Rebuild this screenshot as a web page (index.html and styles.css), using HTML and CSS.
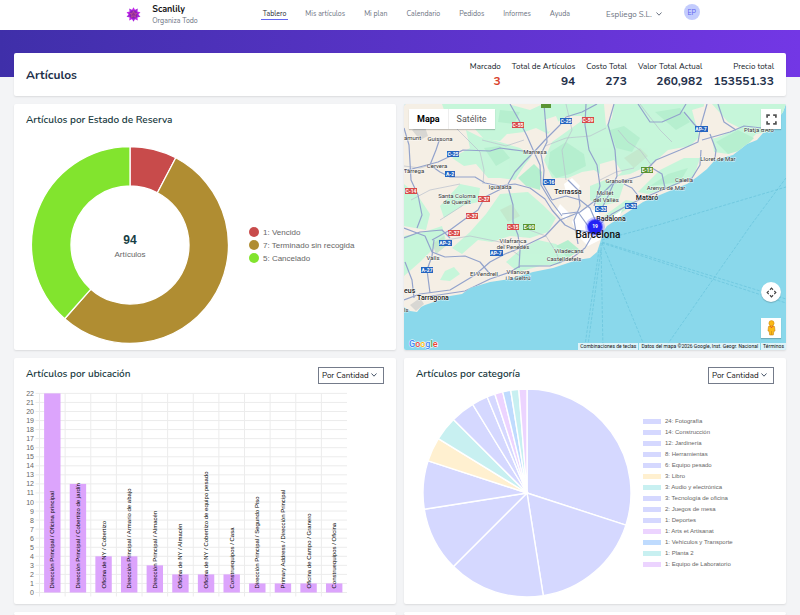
FILE: index.html
```html
<!DOCTYPE html>
<html lang="es">
<head>
<meta charset="utf-8">
<meta name="viewport" content="width=device-width, initial-scale=1">
<title>Scanlily – Tablero</title>
<link rel="stylesheet" href="styles.css">
</head>
<body>
<header class="topbar">
  <a class="brand" href="#">
    <svg class="brand-logo" viewBox="-8 -8 16 16" aria-hidden="true">
      <defs><path id="petal" d="M0-7.8 2.400-3.500 0 0-2.400-3.500Z"/></defs>
      <g fill="#c424ea">
        <use href="#petal"/><use href="#petal" transform="rotate(72)"/><use href="#petal" transform="rotate(144)"/><use href="#petal" transform="rotate(216)"/><use href="#petal" transform="rotate(288)"/>
      </g>
      <g fill="#a826dc">
        <use href="#petal" transform="rotate(36)"/><use href="#petal" transform="rotate(108)"/><use href="#petal" transform="rotate(180)"/><use href="#petal" transform="rotate(252)"/><use href="#petal" transform="rotate(324)"/>
      </g>
      <circle r="4.2" fill="#8a22b4"/>
      <path d="M0-3.6 1-1.2 3.5-1.1 1.5.5 2.2 3 0 1.6-2.2 3-1.5.5-3.5-1.1-1-1.2Z" fill="#8f2a9c" stroke="#d0608a" stroke-width=".6"/>
    </svg>
    <span class="brand-text"><strong>Scanlily</strong><small>Organiza Todo</small></span>
  </a>
  <nav class="nav">
    <a class="active" href="#">Tablero</a>
    <a href="#">Mis artículos</a>
    <a href="#">Mi plan</a>
    <a href="#">Calendario</a>
    <a href="#">Pedidos</a>
    <a href="#">Informes</a>
    <a href="#">Ayuda</a>
  </nav>
  <button class="company" type="button">Espliego S.L.
    <svg class="chevron" viewBox="0 0 6 4" aria-hidden="true"><path d="M.5.5 3 3.2 5.5.5"/></svg>
  </button>
  <button class="avatar" type="button">EP</button>
</header>

<main class="page">
  <section class="card summary">
    <h1>Artículos</h1>
    <dl class="stats">
      <div><dt>Marcado</dt><dd class="alert">3</dd></div>
      <div><dt>Total de Artículos</dt><dd>94</dd></div>
      <div><dt>Costo Total</dt><dd>273</dd></div>
      <div><dt>Valor Total Actual</dt><dd>260,982</dd></div>
      <div><dt>Precio total</dt><dd>153551.33</dd></div>
    </dl>
  </section>

  <div class="grid">
    <section class="card panel">
      <div class="panel-head"><h2>Artículos por Estado de Reserva</h2></div>
      <div class="status-body">
        <div class="donut">
          <svg id="donut" viewBox="-99 -99 198 198" aria-hidden="true"></svg>
          <p class="donut-label"><strong>94</strong><span>Artículos</span></p>
        </div>
        <ul class="status-legend" id="status-legend"></ul>
      </div>
    </section>

    <section class="card map">
      <svg class="map-canvas" viewBox="404 104 382 246" preserveAspectRatio="xMidYMid slice" role="img" aria-label="Mapa">
        <defs>
          <clipPath id="land"><path id="coast" d="M404 104V307L410 311 417 312 421 307 425 305 437 301 450 296 462 294 470 288 490 282 510 279 533 272 553 268 577 260 590 258 597 252 600 243 603 232 607 226 625 214 643 202 667 192 687 184 697 177 707 169 715 160 733 155 747 144 757 140 763 133 773 130 777 120 783 112 786 104Z"/></clipPath>
        </defs>
        <rect x="404" y="104" width="382" height="246" fill="#8ad8eb"/>
        <g clip-path="url(#land)">
          <rect x="404" y="104" width="382" height="246" fill="#f5efe5"/>
          <g fill="#c6f6da">
            <path d="M442 104H508L530 110 543 104H586L583 116 566 116 555 124 548 134 536 128 524 132 507 134 500 141 484 139 474 128 458 124 446 116Z"/>
            <path d="M466 130 480 137 500 142 520 148 532 156 524 166 515 180 500 178 488 178 476 164 464 166 452 158 470 148Z"/>
            <path d="M586 104H704L702 134 690 146 668 150 652 164 630 174 606 178 594 170 582 172 568 178 552 178 544 160 552 142 566 132 580 122Z"/>
            <path d="M712 104H786L778 130 756 134 742 148 728 154 714 152 712 132Z"/>
            <path d="M404 184 418 196 430 214 426 230 404 226Z"/>
            <path d="M460 184 480 188 478 202 462 206 444 218 440 206Z"/>
            <path d="M500 194 528 192 544 206 556 218 548 232 530 238 510 236 492 242 478 240 462 254 452 248 470 232 486 214Z"/>
            <path d="M404 236 424 232 442 226 446 240 432 250 420 262 404 276Z"/>
            <path d="M445 271 454 267 460 274 450 281 440 280Z"/>
            <path d="M520 250 538 240 556 244 570 254 560 264 540 266 518 272 506 262Z"/>
            <path d="M590 186 610 178 624 184 618 202 600 206 590 200Z"/>
            <path d="M638 192 660 170 684 158 700 158 694 176 670 188 648 194Z"/>
            <path d="M604 216 626 200 636 202 612 220Z"/>
          </g>
          <g fill="#b6efcf">
            <path d="M550 152 566 142 584 154 586 166 570 174 556 178 548 168Z"/>
            <path d="M518 178 534 164 542 172 540 190 526 186Z"/>
            <path d="M716 142 738 130 754 138 742 150 728 154Z"/>
            <path d="M610 130 624 126 640 138 632 152 616 148Z"/>
            <path d="M655 112 680 108 690 122 676 130Z"/>
            <path d="M556 246 568 240 580 250 568 258Z"/>
            <path d="M500 110 520 112 514 124 498 122Z"/>
            <path d="M650 186 668 174 688 168 680 182Z"/>
            <path d="M484 148 500 146 510 158 496 166Z"/>
          </g>
          <g fill="#c3e6cb" opacity=".8">
            <path d="M624 158 640 148 648 156 634 168Z"/><path d="M432 244 444 236 446 246 436 254Z"/><path d="M500 210 512 204 520 216 508 222Z"/>
          </g>
          <g fill="#f5efe5">
            <path d="M528 144 542 136 550 146 540 158 530 156Z"/><path d="M544 120 556 116 560 126 548 132Z"/><path d="M692 110 712 104 728 122 740 128 716 138 700 140Z"/><path d="M600 164 614 160 622 172 610 182 600 176Z"/><path d="M604 104H614L612 118 606 126Z"/>
          </g>
          <g fill="#d8d7d3">
            <path d="M412 130 424 124 428 136 420 140Z"/><path d="M410 305 420 298 424 304 416 311Z"/>
          </g>
          <g fill="#fff">
            <path d="M564 184 572 178 580 186 576 194 566 192Z"/><path d="M576 212 588 208 598 212 604 222 600 240 588 246 578 236 572 222Z"/><path d="M610 218 622 210 618 220Z"/><path d="M560 204 570 214 566 220 556 212Z"/>
          </g>
          <g class="road minor">
            <path d="M450 122 466 138 480 152 484 170 483 184"/><path d="M404 166 420 168 430 165"/><path d="M411 200 430 190 460 184"/><path d="M440 220 462 206 470 196"/><path d="M524 140 506 146 482 140"/><path d="M545 146 566 138 590 136 606 128"/><path d="M640 104 646 112 660 130 672 142"/><path d="M618 130 628 142 640 150 652 166"/><path d="M600 180 616 172 634 168"/><path d="M446 240 470 236 500 242 520 256"/><path d="M524 228 546 236 556 252 560 262"/><path d="M566 104 572 130 562 150 566 180"/>
          </g>
          <g class="road">
            <path d="M404 170 412 169 438 162 453 155 463 150 490 151 500 148 523 151 534 152 545 140 560 125 566 117 582 112 597 104"/>
            <path d="M430 165 440 172 450 177 475 177 485 183 500 186 515 184 530 188 545 199 552 210 565 225 575 230 590 232"/>
            <path d="M508 184 515 172 525 161 534 152"/>
            <path d="M510 104 519 120 527 136 534 152 540 165 541 185 550 200 562 216"/>
            <path d="M544 104 546 128 547 142 541 154 544 170 543 184 552 200"/>
            <path d="M586 104 585 125 589 150 597 165 600 186 594 206"/>
            <path d="M404 128 409 145 411 180 418 195 422 215 417 228"/>
            <path d="M430 165 436 150 440 138"/>
            <path d="M503 188 485 197 478 210 465 219 450 230 432 240"/>
            <path d="M508 187 513 205 513 222 518 235 520 250 519 268"/>
            <path d="M404 300 420 294 450 290 475 275 490 262 505 254 520 248 545 236 560 220 580 212 596 200 612 184 640 176 656 160 680 150 698 142 701 125 707 104"/>
            <path d="M425 297 465 291 490 279 510 272 520 266 550 266 572 258 585 248 592 236"/>
            <path d="M600 224 612 214 630 204 648 196 676 184 692 178 700 165 701 150"/>
            <path d="M404 228 425 236 432 252 445 257 465 256 480 262 490 274"/>
            <path d="M434 240 432 256 427 270 430 293"/><path d="M404 238 420 232 442 230 450 238"/>
            <path d="M614 104 608 125 615 150 617 176 608 196 600 212"/>
            <path d="M638 104 650 122 662 122 680 114 686 104"/>
            <path d="M684 112 694 124 702 132"/><path d="M702 140 730 132 744 126 762 128"/><path d="M718 104 724 122 736 130"/><path d="M710 134 716 150 715 158"/><path d="M652 168 662 174 665 188"/>
            <path d="M624 184 632 188 640 198"/><path d="M552 200 566 196 580 200 590 208 596 222"/><path d="M562 214 578 212 588 226 594 232"/><path d="M568 180 578 190 580 206 574 220 578 244"/><path d="M405 262 412 280 414 298"/>
          </g>
        </g>
        <g class="ferry">
          <path d="M602 242 786 299"/><path d="M602 243 786 303"/><path d="M602 243 646 350"/><path d="M601 243 603 350"/><path d="M599 250 585 345"/><path d="M601 250 588 345"/><path d="M667 345 751 225 786 178"/><path d="M602 240 658 225 786 187"/>
        </g>
        <g class="shield">
          <g fill="#2565c0"><rect x="447" y="151" width="12" height="6"/><rect x="445" y="171" width="10" height="6"/><rect x="560" y="118" width="12" height="6"/><rect x="543" y="179" width="12" height="6"/><rect x="695" y="126" width="13" height="6"/><rect x="625" y="203" width="12" height="6"/><rect x="595" y="206" width="12" height="6"/><rect x="439" y="240" width="13" height="6"/><rect x="490" y="250" width="13" height="6"/><rect x="421" y="267" width="12" height="6"/></g>
          <g fill="#d84a4a"><rect x="512" y="122" width="12" height="6"/><rect x="582" y="117" width="12" height="6"/><rect x="405" y="188" width="12" height="6"/><rect x="478" y="196" width="12" height="6"/><rect x="466" y="213" width="12" height="6"/><rect x="448" y="230" width="12" height="6"/><rect x="507" y="224" width="12" height="6"/></g>
          <g fill="#5a9434"><rect x="541" y="103" width="10" height="5"/><rect x="523" y="224" width="12" height="6"/><rect x="641" y="167" width="12" height="6"/></g>
          <g class="shield-text"><text x="453" y="156">C-25</text><text x="450" y="176">A-2</text><text x="566" y="123">C-25</text><text x="549" y="184">C-16</text><text x="701" y="131">AP-7</text><text x="631" y="208">C-32</text><text x="601" y="211">C-33</text><text x="445" y="245">AP-2</text><text x="496" y="255">AP-7</text><text x="427" y="272">A-27</text><text x="518" y="127">C-55</text><text x="588" y="122">C-59</text><text x="411" y="193">C-14</text><text x="484" y="201">C-37</text><text x="472" y="218">C-37</text><text x="454" y="235">C-37</text><text x="513" y="229">C-15</text><text x="529" y="229">E-90</text><text x="647" y="172">E-15</text></g>
        </g>
        <g class="place">
          <text class="edge" x="404" y="140">amunt</text><text x="440" y="141">Guissona</text><text x="437" y="168">Cervera</text><text x="414" y="173">Tàrrega</text><text x="535" y="154">Manresa</text><text x="500" y="189">Igualada</text><text x="457" y="198">Santa Coloma</text><text x="457" y="204">de Queralt</text><text x="619" y="183">Granollers</text><text x="605" y="195">Mollet</text><text x="606" y="202">del Vallès</text><text x="666" y="190">Arenys de Mar</text><text x="684" y="182">Calella</text><text x="718" y="161">Lloret de Mar</text><text x="759" y="132">Platja d'Aro</text><text x="433" y="260">Valls</text><text x="513" y="243">Vilafranca</text><text x="513" y="249">del Penedès</text><text x="569" y="253">Viladecans</text><text x="564" y="261">Castelldefels</text><text x="484" y="276">El Vendrell</text><text x="518" y="274">Vilanova</text><text x="518" y="280">i la Geltrú</text><text class="edge" x="404" y="312">ls</text>
        </g>
        <g class="place town"><text x="568" y="194">Terrassa</text><text x="647" y="200">Mataró</text><text x="611" y="221">Badalona</text><text x="433" y="300">Tarragona</text><text class="edge" x="404" y="293">eus</text></g>
        <circle cx="595" cy="227" r="10" fill="#3434ff" opacity=".25"/><circle cx="595" cy="227" r="8" fill="#2a2aff" opacity=".6"/><circle cx="595" cy="227" r="7" fill="#2222f5"/>
        <text class="cluster" x="595" y="228">19</text>
        <text class="city" x="598" y="238">Barcelona</text>
        <text class="google" x="409" y="347"><tspan fill="#4285f4">G</tspan><tspan fill="#ea4335">o</tspan><tspan fill="#fbbc04">o</tspan><tspan fill="#4285f4">g</tspan><tspan fill="#34a853">l</tspan><tspan fill="#ea4335">e</tspan></text>
      </svg>
      <div class="map-type"><button class="selected" type="button">Mapa</button><button type="button">Satélite</button></div>
      <div class="map-tools">
        <button class="tool" type="button" aria-label="Pantalla completa"><svg viewBox="0 0 10 10"><path d="M1 3.5V1H3.5M6.500 1H9V3.500M9 6.500V9H6.500M3.500 9H1V6.500" fill="none" stroke="#555" stroke-width="1.6"/></svg></button>
        <button class="tool round" type="button" aria-label="Controles de cámara"><svg viewBox="0 0 12 12"><path d="M4.300 3 6 1.300 7.700 3M4.300 9 6 10.700 7.700 9M3 4.300 1.300 6 3 7.700M9 4.300 10.700 6 9 7.700" fill="none" stroke="#444" stroke-width="1.300"/></svg></button>
        <button class="tool" type="button" aria-label="Street View"><svg class="pegman" viewBox="0 0 10 16"><path d="M2 6.500Q5 4 8 6.500L8.500 11 7.300 11.300 6.800 15H3.200L2.700 11.300 1.500 11Z" fill="#fbb917" stroke="#c98413" stroke-width=".6"/><circle cx="5" cy="3.200" r="2.600" fill="#fbb917" stroke="#c98413" stroke-width=".5"/><path d="M3.500 6.200 5 7.700 6.500 6.200" fill="none" stroke="#e0452c" stroke-width="1"/><path d="M5 11V15" stroke="#c98413" stroke-width=".6"/></svg></button>
      </div>
      <div class="map-credits"><a href="#">Combinaciones de teclas</a><span>Datos del mapa ©2026 Google, Inst. Geogr. Nacional</span><a href="#">Términos</a></div>
    </section>

    <section class="card panel">
      <div class="panel-head">
        <h2>Artículos por ubicación</h2>
        <div class="select"><select aria-label="Ordenar ubicaciones"><option>Por Cantidad</option></select><svg class="chevron" viewBox="0 0 6 4" aria-hidden="true"><path d="M.5.5 3 3.200 5.500.5"/></svg></div>
      </div>
      <svg class="bars" id="bars" viewBox="0 0 358 214" role="img" aria-label="Artículos por ubicación"></svg>
    </section>

    <section class="card panel">
      <div class="panel-head">
        <h2>Artículos por categoría</h2>
        <div class="select"><select aria-label="Ordenar categorías"><option>Por Cantidad</option></select><svg class="chevron" viewBox="0 0 6 4" aria-hidden="true"><path d="M.5.5 3 3.200 5.500.5"/></svg></div>
      </div>
      <div class="category-body">
        <svg class="pie" id="pie" viewBox="-104 -104 208 208" aria-hidden="true"></svg>
        <ul class="category-legend" id="category-legend"></ul>
      </div>
    </section>

    <section class="card"></section>
    <section class="card"></section>
  </div>
</main>
<script src="charts.js"></script>
</body>
</html>
```
FILE: styles.css
```css
* { box-sizing: border-box; }
body {
  margin: 0;
  min-height: 100vh;
  display: flex;
  flex-direction: column;
  background: #f3f4f6;
  color: #1e293b;
  font-family: Nunito, Lato, "Noto Sans", sans-serif;
  font-size: 8px;
}
h1, h2, p, ul, dl, dd { margin: 0; padding: 0; }
ul { list-style: none; }
a { color: inherit; text-decoration: none; }
button { border: 0; padding: 0; background: none; color: inherit; font: inherit; }
svg { display: block; }

.topbar {
  display: flex;
  align-items: center;
  justify-content: center;
  height: 30px;
  padding: 0 0 2px 26px;
  background: #fff;
  color: #6b7280;
}
.brand { display: flex; align-items: center; gap: 11px; margin-right: 65px; }
.brand-logo { width: 15px; height: 15px; }
.brand-text { display: flex; flex-direction: column; }
.brand-text strong { color: #111; font-size: 9px; line-height: 12px; }
.brand-text small { font-size: 7px; line-height: 11px; }
.nav { display: flex; gap: 19px; font-size: 7px; line-height: 10px; }
.nav .active { color: #1f2937; box-shadow: 0 1px #6366f1; margin: 0 -2px; padding: 0 2px; }
.company { display: flex; align-items: center; gap: 4px; margin-left: 36px; }
.chevron { width: 6px; height: 4px; fill: none; stroke: #6b7280; }
.avatar {
  width: 16px;
  height: 16px;
  margin: 0 0 4px 22px;
  border-radius: 50%;
  background: #c3ccfd;
  color: #5b5ff0;
  font-size: 7px;
}

.page {
  flex: 1;
  display: flex;
  flex-direction: column;
  gap: 8px;
  padding: 23px 14px 0;
  background: linear-gradient(90deg, #3f2fa9, #7337e5) 0 0 / 100% 47px no-repeat;
}
.card {
  position: relative;
  border-radius: 2px;
  background: #fff;
  box-shadow: 0 1px 2px #0000001a;
}
.summary {
  display: flex;
  align-items: center;
  justify-content: space-between;
  height: 43px;
  padding: 0 12px;
}
h1 { font-size: 12px; line-height: 16px; color: #1e2f4a; font-weight: 700; }
.stats { display: flex; gap: 11px; text-align: right; color: #111827; }
.stats dt { font-size: 8px; line-height: 12px; }
.stats dd { font-size: 12px; line-height: 16px; font-weight: 700; color: #1e2f4a; }
.stats .alert { color: #d9412b; }

.grid {
  flex: 1;
  display: grid;
  grid-template-columns: 1fr 1fr;
  grid-template-rows: 246px 246px 1fr;
  gap: 8px;
}
.panel { padding: 7px 12px 2px; }
.panel-head { display: flex; align-items: center; justify-content: space-between; height: 18px; }
h2 { font-size: 10px; line-height: 16px; font-weight: 600; color: #17393e; }

.select { display: grid; align-items: center; width: 66px; height: 17px; margin-top: 2px; }
.select > * { grid-area: 1 / 1; }
.select select {
  appearance: none;
  width: 100%;
  height: 100%;
  padding: 0 3px;
  border: 1px solid #747b8a;
  border-radius: 0;
  background: #fff;
  color: #111;
  font: 8px Nunito, Lato, sans-serif;
}
.select .chevron { justify-self: end; margin-right: 7px; stroke: #475569; }

.status-body { display: flex; align-items: center; gap: 20px; padding: 17px 0 0 5px; }
.donut { display: grid; place-items: center; width: 198px; }
.donut > * { grid-area: 1 / 1; }
.donut svg { width: 100%; }
.donut-label { display: flex; flex-direction: column; align-items: center; padding-top: 4px; }
.donut-label strong { font-size: 12px; line-height: 16px; font-weight: 700; color: #173f45; font-family: "Liberation Sans", sans-serif; }
.donut-label span { font: 8px/14px "Liberation Sans", sans-serif; color: #666; }
.status-legend, .category-legend { font-family: "Liberation Sans", sans-serif; color: #666; }
.status-legend li { display: flex; align-items: center; gap: 4px; font-size: 8px; line-height: 13px; white-space: nowrap; }
.status-legend i { width: 10px; height: 10px; border-radius: 50%; }

.bars { width: 100%; margin-top: 5px; font-family: "Liberation Sans", sans-serif; }
.bars .line { stroke: #ececec; }
.bars .tick { fill: #666; font-size: 7px; text-anchor: end; }
.bars .bar { fill: #dca4fc; }
.bars .name { fill: #000; font-size: 6px; }

.category-body { display: flex; align-items: center; gap: 12px; padding: 6px 0 0 7px; }
.pie { width: 208px; }
.category-legend li { display: flex; align-items: center; gap: 4px; font-size: 6px; line-height: 11px; white-space: nowrap; }
.category-legend i { width: 18px; height: 5px; }

.map { overflow: hidden; font-family: Roboto, sans-serif; }
.map-canvas { width: 100%; height: 100%; }
.road { fill: none; stroke: #93a3cc; stroke-width: 1.2; stroke-linejoin: round; }
.road.minor { stroke: #b9c0cd; stroke-width: .7; }
.ferry { fill: none; stroke: #62bfd8; stroke-width: .6; stroke-dasharray: 3 1.5; }
.shield-text { fill: #fff; font-size: 5px; font-weight: 700; text-anchor: middle; }
.place { fill: #333; stroke: #ffffffb0; stroke-width: 1; paint-order: stroke; font-size: 6px; text-anchor: middle; }
.town { fill: #222; font-size: 7px; font-weight: 500; }
.place .edge { text-anchor: start; }
.city { fill: #111; font-size: 10px; font-weight: 500; text-anchor: middle; }
.cluster { fill: #fff; font-size: 5px; font-weight: 700; text-anchor: middle; }
.google { stroke: #fff; stroke-width: 1; paint-order: stroke; font-size: 9px; font-weight: 500; }
.map-type {
  position: absolute;
  top: 5px;
  left: 5px;
  display: flex;
  background: #fff;
  box-shadow: 0 1px 1px #0003;
  color: #565656;
  font-size: 9px;
  line-height: 20px;
}
.map-type button { padding: 0 8px; }
.map-type .selected { color: #000; font-weight: 700; border-right: 1px solid #eee; }
.map-tools { position: absolute; inset: 5px 5px 12px auto; display: flex; flex-direction: column; gap: 16px; }
.tool {
  display: grid;
  place-items: center;
  width: 20px;
  height: 20px;
  background: #fff;
  box-shadow: 0 1px 1px #0003;
}
.tool svg { width: 11px; height: 11px; }
.tool .pegman { height: 16px; }
.tool:first-child { margin-bottom: auto; }
.round { border-radius: 50%; }
.map-credits {
  position: absolute;
  right: 0;
  bottom: 0;
  display: flex;
  gap: 1px;
  color: #111;
  font-size: 5px;
  line-height: 7px;
}
.map-credits > * { padding: 0 2px; background: #ffffffb8; }
```
FILE: charts.js
```js
const NS = 'http://www.w3.org/2000/svg';

function add(parent, tag, attrs, text) {
  const el = document.createElementNS(NS, tag);
  for (const key in attrs) el.setAttribute(key, attrs[key]);
  if (text !== undefined) el.textContent = text;
  parent.append(el);
}

function drawSlices(svg, data, outer, inner, gap) {
  const total = data.reduce((sum, d) => sum + d[0], 0);
  const at = (r, a) => (r * Math.sin(a)).toFixed(2) + ' ' + (-r * Math.cos(a)).toFixed(2);
  let start = 0;
  for (const [value, , color] of data) {
    const end = start + value / total * 2 * Math.PI;
    const large = end - start > Math.PI ? 1 : 0;
    const back = inner ? `L${at(inner, end)}A${inner} ${inner} 0 ${large} 0 ${at(inner, start)}Z` : 'L0 0Z';
    add(svg, 'path', {
      d: `M${at(outer, start)}A${outer} ${outer} 0 ${large} 1 ${at(outer, end)}${back}`,
      fill: color, stroke: '#fff', 'stroke-width': gap
    });
    start = end;
  }
}

function fillLegend(list, data) {
  for (const [value, name, color] of data) {
    const item = document.createElement('li');
    const mark = document.createElement('i');
    mark.style.background = color;
    item.append(mark, `${value}: ${name}`);
    list.append(item);
  }
}

const statuses = [
  [1, 'Vencido', '#c84b4b'],
  [7, 'Terminado sin recogida', '#b08d32'],
  [5, 'Cancelado', '#82e42e']
];
drawSlices(document.getElementById('donut'), statuses, 98.5, 59, 1.3);
fillLegend(document.getElementById('status-legend'), statuses);

const indigo = '#d5d8ff', pink = '#ecd4ff', teal = '#c8f0f1', blue = '#bfdbfe', amber = '#fff0d0';
const categories = [
  [24, 'Fotografía', indigo], [14, 'Construcción', indigo], [12, 'Jardinería', indigo],
  [8, 'Herramientas', indigo], [6, 'Equipo pesado', indigo], [3, 'Libro', amber],
  [3, 'Audio y electrónica', teal], [3, 'Tecnología de oficina', indigo],
  [2, 'Juegos de mesa', indigo], [1, 'Deportes', indigo], [1, 'Arts et Artisanat', pink],
  [1, 'Vehículos y Transporte', blue], [1, 'Planta 2', teal], [1, 'Equipo de Laboratorio', pink]
];
drawSlices(document.getElementById('pie'), categories, 104, 0, 1.4);
fillLegend(document.getElementById('category-legend'), categories);

const locations = [
  [22, 'Dirección Principal / Oficina principal'],
  [12, 'Dirección Principal / Cobertizo de jardín'],
  [4, 'Oficina de NY / Cobertizo'],
  [4, 'Dirección Principal / Armario de abajo'],
  [3, 'Dirección Principal / Almacén'],
  [2, 'Oficina de NY / Almacén'],
  [2, 'Oficina de NY / Cobertizo de equipo pesado'],
  [2, 'Construequipos / Casa'],
  [1, 'Dirección Principal / Segundo Piso'],
  [1, 'Primary Address / Dirección Principal'],
  [1, 'Oficina de Campo / Granero'],
  [1, 'Construequipos / Oficina']
];
const bars = document.getElementById('bars');
const left = 13.5, right = 321, base = 204.5, unit = 9.05, max = 22;
const column = (right - left) / locations.length;
for (let n = 0; n <= max; n++) {
  const y = base - n * unit;
  add(bars, 'line', { class: 'line', x1: left - 4, x2: right, y1: y, y2: y });
  add(bars, 'text', { class: 'tick', x: 8, y: y + 2.5 }, n);
}
locations.forEach(([value, name], i) => {
  const x = left + i * column;
  const middle = x + column / 2;
  add(bars, 'line', { class: 'line', x1: x, x2: x, y1: base - max * unit, y2: base + 4 });
  add(bars, 'rect', { class: 'bar', x: middle - 8.2, y: base - value * unit, width: 16.4, height: value * unit });
  add(bars, 'text', { class: 'name', transform: `translate(${middle + 2} ${base - 4}) rotate(-90)` }, name);
});
```
